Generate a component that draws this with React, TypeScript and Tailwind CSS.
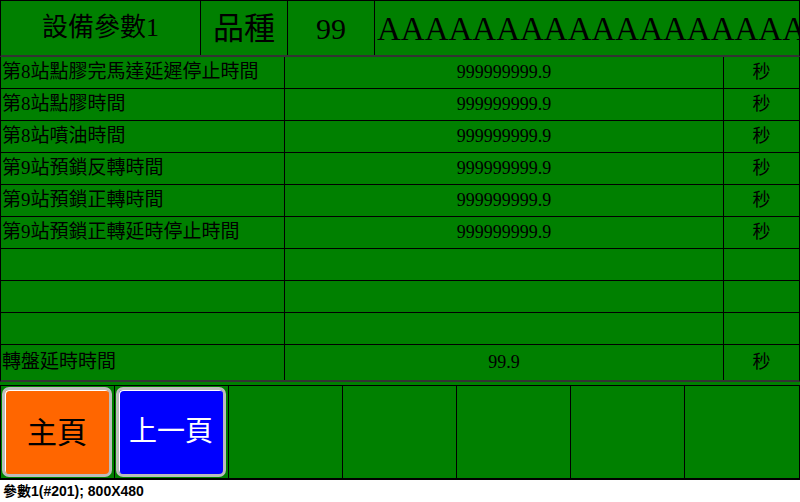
import React from 'react';

const serif = "font-['Liberation_Serif','Noto_Sans_CJK_TC',serif]";

const rows = [
  { label: '第8站點膠完馬達延遲停止時間', value: '999999999.9', unit: '秒' },
  { label: '第8站點膠時間', value: '999999999.9', unit: '秒' },
  { label: '第8站噴油時間', value: '999999999.9', unit: '秒' },
  { label: '第9站預鎖反轉時間', value: '999999999.9', unit: '秒' },
  { label: '第9站預鎖正轉時間', value: '999999999.9', unit: '秒' },
  { label: '第9站預鎖正轉延時停止時間', value: '999999999.9', unit: '秒' },
  { label: '', value: '', unit: '' },
  { label: '', value: '', unit: '' },
  { label: '', value: '', unit: '' },
];

const Row = ({
  label,
  value,
  unit,
  last,
}: {
  label: string;
  value: string;
  unit: string;
  last?: boolean;
}) => (
  <div className={`flex ${last ? 'h-[35px]' : 'h-[32px] border-b border-black'}`}>
    <div className="w-[284px] border-r border-black flex items-center pl-[1px] text-[19px] whitespace-nowrap overflow-hidden">
      {label}
    </div>
    <div className="w-[439px] border-r border-black flex items-center justify-center text-[18px]">
      {value}
    </div>
    <div className="flex-1 flex items-center justify-center text-[18px]">{unit}</div>
  </div>
);

const App = () => {
  return (
    <div className={`w-[800px] h-[502px] bg-white text-black ${serif}`}>
      <div className="h-[480px] bg-[#008000] flex flex-col">
        {/* header */}
        <div className="h-[57px] flex border-t border-x border-black border-b-2 border-b-[#333333]">
          <div className="w-[200px] border-r border-black flex items-center justify-center text-[26px] leading-none">
            設備參數1
          </div>
          <div className="w-[87px] border-r border-black flex items-center justify-center text-[31px] leading-none">
            品種
          </div>
          <div className="w-[87px] border-r border-black flex items-center justify-center text-[30px] leading-none pt-[2px]">
            99
          </div>
          <div className="flex-1 flex items-center overflow-hidden whitespace-nowrap pl-[2px] text-[33px] leading-none pt-[2px]">
            AAAAAAAAAAAAAAAAAAAA
          </div>
        </div>

        {/* parameter table */}
        <div className="border-x border-black border-b-2 border-b-[#333333]">
          {rows.map((r, i) => (
            <Row key={i} {...r} />
          ))}
          <Row label="轉盤延時時間" value="99.9" unit="秒" last />
        </div>

        {/* buttons */}
        <div className="mt-[3px] h-[95px] flex border-x border-t border-black border-b-2">
          <div className="w-[114px] border-r border-black p-[1px] pr-[2px]">
            <button className="w-full h-full rounded-[7px] border-[3px] border-[#bcbcbc] bg-[#ff6600] text-black text-[30px] flex items-center justify-center shadow-[inset_1px_1px_0_#ffffff]">
              主頁
            </button>
          </div>
          <div className="w-[114px] border-r border-black p-[1px] pr-[2px]">
            <button className="w-full h-full rounded-[7px] border-[3px] border-[#bcbcbc] bg-[#0000ff] text-white text-[28px] flex items-center justify-center shadow-[inset_1px_1px_0_#ffffff]">
              上一頁
            </button>
          </div>
          <div className="w-[114px] border-r border-black" />
          <div className="w-[114px] border-r border-black" />
          <div className="w-[114px] border-r border-black" />
          <div className="w-[114px] border-r border-black" />
          <div className="flex-1" />
        </div>
      </div>
      <div className="h-[22px] flex items-center pl-[3px] text-[14px] font-bold font-['Liberation_Sans','Noto_Sans_CJK_TC',sans-serif]">
        參數1(#201); 800X480
      </div>
    </div>
  );
};

export default App;
